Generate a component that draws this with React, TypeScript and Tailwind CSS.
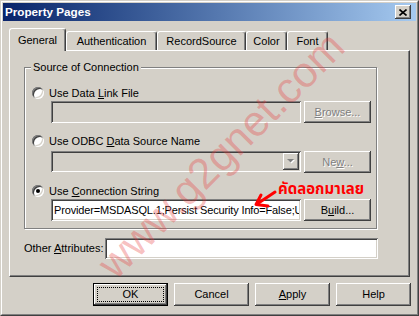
import React from "react";

const raised =
  "bg-[#d4d0c8] shadow-[inset_-1px_-1px_0_#404040,inset_1px_1px_0_#fff,inset_-2px_-2px_0_#808080]";
const sunken =
  "shadow-[inset_1px_1px_0_#808080,inset_-1px_-1px_0_#fff,inset_2px_2px_0_#404040,inset_-2px_-2px_0_#d4d0c8]";

function Radio({ checked = false }: { checked?: boolean }) {
  return (
    <span className="flex h-[12px] w-[12px] shrink-0 items-center justify-center rounded-full bg-white shadow-[inset_1px_1px_0_#808080,inset_-1px_-1px_0_#fff,inset_2px_2px_0_#404040,inset_-2px_-2px_0_#d4d0c8]">
      {checked && <span className="h-[4px] w-[4px] rounded-full bg-black" />}
    </span>
  );
}

function Btn({
  children,
  disabled = false,
  className = "",
}: {
  children: React.ReactNode;
  disabled?: boolean;
  className?: string;
}) {
  return (
    <div
      className={`flex items-center justify-center leading-none ${raised} ${
        disabled ? "text-[#808080] [text-shadow:1px_1px_0_#fff]" : "text-black"
      } ${className}`}
    >
      {children}
    </div>
  );
}

function Tab({
  label,
  width,
  selected = false,
}: {
  label: string;
  width: string;
  selected?: boolean;
}) {
  return (
    <div
      className={`flex items-center justify-center rounded-t-[3px] border-t border-l border-r border-t-white border-l-white border-r-[#404040] bg-[#d4d0c8] shadow-[inset_-1px_0_0_#808080] ${width} ${
        selected ? "relative z-10 -mb-[1px] h-[23px]" : "h-[19px] pt-[1px]"
      }`}
    >
      {label}
    </div>
  );
}

export default function App() {
  return (
    <div
      className="relative h-[316px] w-[419px] overflow-hidden border border-t-[#d4d0c8] border-l-[#d4d0c8] border-r-[#404040] border-b-[#404040] bg-[#d4d0c8] text-[11px] text-black"
      style={{ fontFamily: '"Liberation Sans", Arial, sans-serif' }}
    >
      <div className="flex h-full flex-col border border-t-white border-l-white border-r-[#808080] border-b-[#808080] p-[1px]">
        {/* title bar */}
        <div className="flex h-[18px] shrink-0 items-center justify-between bg-gradient-to-r from-[#0a246a] to-[#a6caf0] pl-[2px] pr-[5px]">
          <span className="text-[11.7px] font-bold text-white">Property Pages</span>
          <div className={`flex h-[14px] w-[16px] items-center justify-center ${raised}`}>
            <svg width="8" height="7" viewBox="0 0 8 7">
              <path d="M0.5 0.5 L7.5 6.5 M7.5 0.5 L0.5 6.5" stroke="#000" strokeWidth="1.6" />
            </svg>
          </div>
        </div>

        {/* tabs */}
        <div className="ml-[6px] mt-[7px] flex h-[22px] items-end">
          <Tab label="General" width="w-[57px]" selected />
          <Tab label="Authentication" width="w-[91px]" />
          <Tab label="RecordSource" width="w-[89px]" />
          <Tab label="Color" width="w-[41px]" />
          <Tab label="Font" width="w-[41px]" />
        </div>

        {/* panel */}
        <div className="ml-[6px] flex h-[227px] w-[401px] flex-col border border-t-white border-l-white border-r-[#404040] border-b-[#404040] shadow-[inset_-1px_-1px_0_#808080]">
          <div className="relative ml-[14px] mt-[16px] flex h-[162px] w-[353px] flex-col border border-[#808080] shadow-[1px_1px_0_#fff,inset_1px_1px_0_#fff]">
            <span className="absolute -top-[7px] left-[6px] bg-[#d4d0c8] px-[2px] leading-[13px]">
              Source of Connection
            </span>

            <div className="ml-[7px] mt-[19px] flex h-[12px] items-center gap-[5px] leading-[12px]">
              <Radio />
              <span>
                Use Data <u>L</u>ink File
              </span>
            </div>
            <div className="ml-[26px] mt-[2px] flex gap-[3px]">
              <div className={`h-[22px] w-[250px] bg-[#d4d0c8] ${sunken}`} />
              <Btn disabled className="h-[22px] w-[67px]">
                <span>
                  <u>B</u>rowse...
                </span>
              </Btn>
            </div>

            <div className="ml-[7px] mt-[12px] flex h-[12px] items-center gap-[5px] leading-[12px]">
              <Radio />
              <span>
                Use ODBC <u>D</u>ata Source Name
              </span>
            </div>
            <div className="ml-[26px] mt-[4px] flex gap-[3px]">
              <div className={`flex h-[21px] w-[250px] justify-end bg-[#d4d0c8] p-[2px] ${sunken}`}>
                <div className={`flex h-[17px] w-[16px] items-center justify-center ${raised}`}>
                  <svg width="8" height="5" viewBox="0 0 8 5">
                    <path d="M1 1 H8 L4.5 4.5 Z" fill="#fff" />
                    <path d="M0 0 H7 L3.5 3.5 Z" fill="#808080" />
                  </svg>
                </div>
              </div>
              <Btn disabled className="h-[22px] w-[67px]">
                <span>
                  Ne<u>w</u>...
                </span>
              </Btn>
            </div>

            <div className="ml-[7px] mt-[12px] flex h-[12px] items-center gap-[5px] leading-[12px]">
              <Radio checked />
              <span>
                Use <u>C</u>onnection String
              </span>
            </div>
            <div className="ml-[26px] mt-[2px] flex gap-[3px]">
              <div
                className={`flex h-[22px] w-[250px] items-center overflow-hidden whitespace-nowrap bg-white pl-[3px] pr-[2px] tracking-[-0.15px] ${sunken}`}
              >
                <span className="overflow-hidden">
                  Provider=MSDASQL.1;Persist Security Info=False;User ID=sa
                </span>
              </div>
              <Btn className="h-[22px] w-[67px]">
                <span>
                  B<u>u</u>ild...
                </span>
              </Btn>
            </div>
          </div>

          <div className="ml-[14px] mt-[9px] flex items-center">
            <span className="w-[81px]">
              Other <u>A</u>ttributes:
            </span>
            <div className={`h-[21px] w-[273px] bg-white ${sunken}`} />
          </div>
        </div>

        {/* buttons */}
        <div className="mt-[6px] flex justify-end gap-[6px] pr-[5px]">
          <div className="h-[23px] w-[75px] border border-black">
            <div className={`flex h-full items-center justify-center p-[3px] ${raised}`}>
              <div className="flex h-full w-full items-center justify-center border border-dotted border-black">
                OK
              </div>
            </div>
          </div>
          <Btn className="h-[23px] w-[75px]">Cancel</Btn>
          <Btn className="h-[23px] w-[75px]">
            <span>
              <u>A</u>pply
            </span>
          </Btn>
          <Btn className="h-[23px] w-[75px]">Help</Btn>
        </div>
      </div>

      {/* annotation */}
      <span
        className="absolute left-[277px] top-[179px] z-30 whitespace-nowrap text-[15px] font-bold leading-[20px] text-[#ff0000]"
        style={{ fontFamily: '"Noto Sans Thai", "Loma", "Garuda", "Liberation Sans", sans-serif' }}
      >
        คัดลอกมาเลย
      </span>
      <svg className="absolute left-[250px] top-[186px] z-30" width="30" height="24" viewBox="0 0 30 24">
        <path d="M24 5 L6 17" stroke="#ff0000" strokeWidth="3" strokeLinecap="round" />
        <path d="M10 8 L5 17.5 L17 19" stroke="#ff0000" strokeWidth="3" fill="none" strokeLinecap="round" strokeLinejoin="round" />
      </svg>

      {/* watermark */}
      <span className="pointer-events-none absolute left-[220px] top-[154px] z-20 -translate-x-1/2 -translate-y-1/2 -rotate-45 whitespace-nowrap text-[43px] leading-none text-[rgba(232,60,60,0.32)]">
        www.g2gnet.com
      </span>
    </div>
  );
}
